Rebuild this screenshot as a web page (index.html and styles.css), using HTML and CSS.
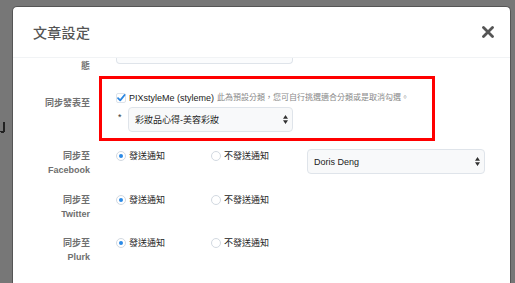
FILE: index.html
```html
<!DOCTYPE html>
<html lang="zh-Hant">
<head>
  <meta charset="UTF-8">
  <meta name="viewport" content="width=device-width, initial-scale=1.0">
  <title>文章設定</title>
  <link rel="stylesheet" href="styles.css">
</head>
<body>
  <div class="backdrop">
    <span class="peek"></span>
    <div class="modal">
      <header class="modal-header">
        <h1>文章設定</h1>
        <button class="close" aria-label="close">
          <svg viewBox="0 0 12 12" width="12" height="12">
            <path d="M1.5 1.5 L10.5 10.5 M10.5 1.5 L1.5 10.5" stroke="#555" stroke-width="2.8" stroke-linecap="round"/>
          </svg>
        </button>
      </header>

      <div class="modal-body">
        <div class="row row-prev">
          <div class="row-label">態</div>
          <div class="field">
            <div class="input-stub"></div>
          </div>
        </div>

        <div class="row row-sync">
          <div class="row-label">同步發表至</div>
          <div class="field">
            <div class="highlight"></div>
            <div class="check-line">
              <span class="checkbox">
                <svg viewBox="0 0 10 10" width="10" height="10">
                  <path d="M2 5.2 L4.2 7.4 L8.6 2" fill="none" stroke="#2b86e0" stroke-width="1.8" stroke-linecap="round" stroke-linejoin="round"/>
                </svg>
              </span>
              <span class="check-text">PIXstyleMe (styleme)</span>
              <small class="hint">此為預設分類，您可自行挑選適合分類或是取消勾選。</small>
            </div>
            <div class="select-line">
              <span class="req">*</span>
              <div class="select select-cat">
                <span>彩妝品心得-美容彩妝</span>
                <svg class="arrows" viewBox="0 0 5 9" width="5" height="9">
                  <path d="M0 3.8 L2.5 0 L5 3.8 Z M0 5.2 L5 5.2 L2.5 9 Z" fill="#333"/>
                </svg>
              </div>
            </div>
          </div>
        </div>

        <div class="row row-social">
          <div class="row-label">同步至<br>Facebook</div>
          <div class="field options">
            <span class="option"><span class="radio checked"></span>發送通知</span>
            <span class="option"><span class="radio"></span>不發送通知</span>
            <div class="select select-page">
              <span>Doris Deng</span>
              <svg class="arrows" viewBox="0 0 5 9" width="5" height="9">
                <path d="M0 3.8 L2.5 0 L5 3.8 Z M0 5.2 L5 5.2 L2.5 9 Z" fill="#333"/>
              </svg>
            </div>
          </div>
        </div>

        <div class="row row-social">
          <div class="row-label">同步至<br>Twitter</div>
          <div class="field options">
            <span class="option"><span class="radio checked"></span>發送通知</span>
            <span class="option"><span class="radio"></span>不發送通知</span>
          </div>
        </div>

        <div class="row row-social">
          <div class="row-label">同步至<br>Plurk</div>
          <div class="field options">
            <span class="option"><span class="radio checked"></span>發送通知</span>
            <span class="option"><span class="radio"></span>不發送通知</span>
          </div>
        </div>
      </div>
    </div>
  </div>
</body>
</html>
```

FILE: styles.css
```css
*, *::before, *::after {
  box-sizing: border-box;
  margin: 0;
  padding: 0;
}

html, body {
  height: 100%;
  overflow: hidden;
}

body {
  font-family: "Liberation Sans", "Noto Sans CJK TC", sans-serif;
  background: #777;
  color: #333;
}

.backdrop {
  position: relative;
  height: 100%;
  padding: 6px 4px 0 12px;
}

/* sliver of the page behind the overlay */
.peek {
  position: absolute;
  left: 0;
  top: 122px;
  width: 5px;
  height: 10px;
  border-right: 2px solid #222;
  border-bottom: 1px solid #222;
  box-shadow: 0 2px 0 -1px #222;
}

.modal {
  height: 100%;
  background: #fff;
  border: 1px solid #555;
  border-bottom: none;
  border-radius: 5px 5px 0 0;
  overflow: hidden;
}

.modal-header {
  display: flex;
  justify-content: space-between;
  align-items: center;
  height: 51px;
  padding: 0 16px 0 20px;
  border-bottom: 1px solid #f1f3f5;

  h1 {
    font-size: 14px;
    font-weight: 500;
    color: #555;
    letter-spacing: 0.3px;
  }

  .close {
    display: grid;
    place-content: center;
    border: none;
    background: none;
  }
}

.row {
  display: grid;
  grid-template-columns: 77px 1fr;
  column-gap: 26px;
}

.row-label {
  text-align: right;
  font-size: 9px;
  line-height: 14px;
  font-weight: bold;
  color: #6f6f6f;
}

.field {
  position: relative;
  font-size: 9px;
  line-height: 14px;
}

.row-prev {
  height: 15px;

  .row-label {
    padding-top: 1px;
  }

  .input-stub {
    width: 177px;
    height: 6px;
    border: 1px solid #dfe4ea;
    border-top: none;
    border-radius: 0 0 4px 4px;
    background: #fbfcfd;
  }
}

.row-sync {
  margin-top: 18px;

  .row-label {
    padding-top: 5px;
  }
}

.highlight {
  position: absolute;
  left: -17px;
  top: -15px;
  width: 336px;
  height: 65px;
  border: 3px solid #f00;
}

.check-line {
  display: flex;
  align-items: center;
  white-space: nowrap;

  .checkbox {
    display: grid;
    place-content: center;
    width: 10px;
    height: 10px;
    margin-right: 3px;
    border: 1px solid #dde3ea;
    border-radius: 2px;
    background: #fff;
  }

  .check-text {
    color: #222;
  }

  .hint {
    margin-left: 3px;
    font-size: 8px;
    color: #888;
  }
}

.select-line {
  display: flex;
  align-items: center;
  margin-top: 2px;

  .req {
    width: 12px;
    padding-left: 2px;
    margin-top: -6px;
    font-size: 9px;
    color: #333;
  }
}

.select {
  display: flex;
  justify-content: space-between;
  align-items: center;
  height: 25px;
  padding: 0 4px 0 6px;
  border: 1px solid #dfe4ea;
  border-radius: 4px;
  background: #f8f9fa;
  font-size: 9px;
  color: #222;
}

.select-cat {
  width: 165px;
}

.select-page {
  width: 178px;
}

.row-social {
  height: 43.5px;
}

.row-sync + .row-social {
  margin-top: 17px;
}

.options {
  display: flex;
  align-items: flex-start;

  .option {
    display: flex;
    align-items: center;
    width: 95px;
    height: 14px;
    color: #222;
    white-space: nowrap;

    &:nth-child(2) {
      width: 96px;
    }
  }
}

.radio {
  display: grid;
  place-content: center;
  width: 10px;
  height: 10px;
  margin-right: 3px;
  border: 1px solid #d2d9e1;
  border-radius: 50%;
  background: #fff;

  &.checked::after {
    content: "";
    width: 4px;
    height: 4px;
    border-radius: 50%;
    background: #2b8ae6;
  }
}
```
